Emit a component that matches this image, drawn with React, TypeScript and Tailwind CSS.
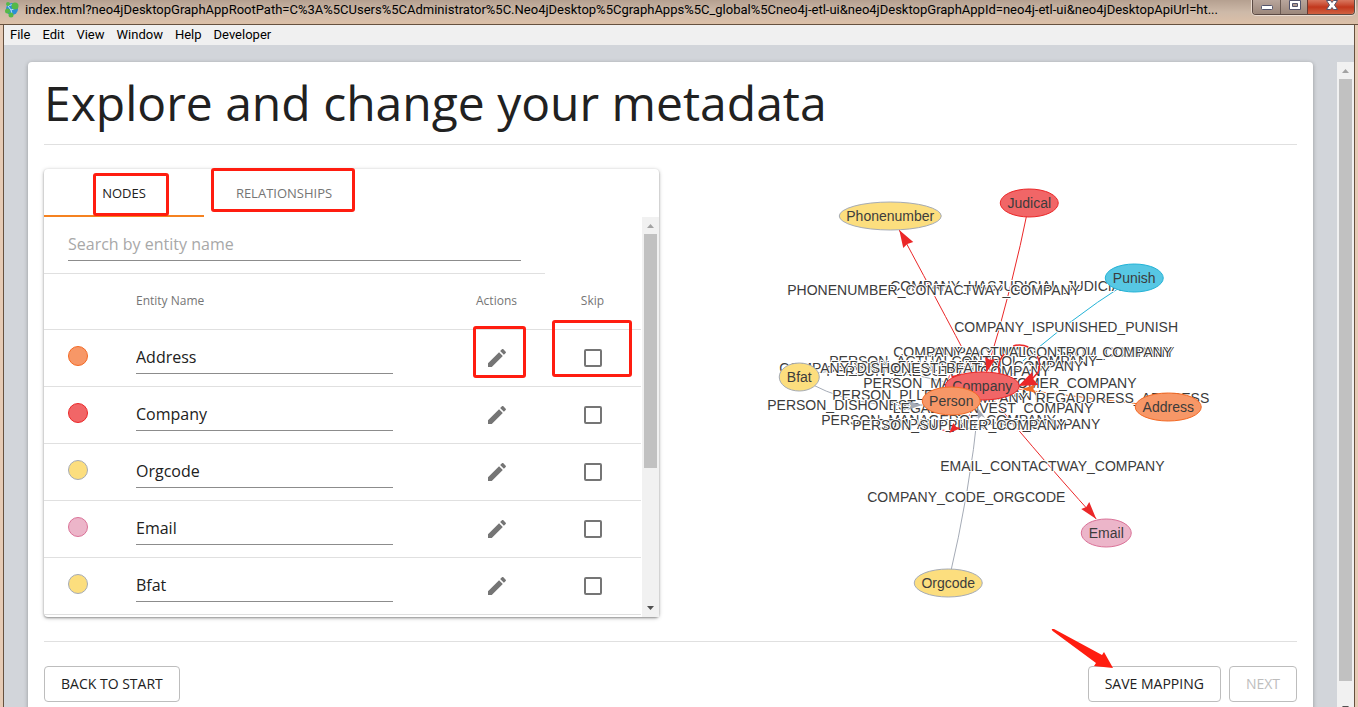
import { useState } from "react";
import type { ReactNode } from "react";

type Entity = { name: string; fill: string; stroke: string };

const entities: Entity[] = [
  { name: "Address", fill: "#f79767", stroke: "#f36924" },
  { name: "Company", fill: "#f16667", stroke: "#eb2728" },
  { name: "Orgcode", fill: "#fcde7e", stroke: "#a5abb6" },
  { name: "Email", fill: "#ecb5c9", stroke: "#da7298" },
  { name: "Bfat", fill: "#fcde7e", stroke: "#a5abb6" },
];

type EdgeLabel = { text: string; x: number; y: number; anchor?: "start" | "end" };

const edgeLabels: EdgeLabel[] = [
  { text: "COMPANY_HASJUDICIAL_JUDICIAL", x: 890, y: 286 },
  { text: "PHONENUMBER_CONTACTWAY_COMPANY", x: 787, y: 290 },
  { text: "COMPANY_ISPUNISHED_PUNISH", x: 954, y: 327 },
  { text: "COMPANY_MAINCUSTOM_COMPANY", x: 1174, y: 352, anchor: "end" },
  { text: "COMPANY_ACTUALCONTROL_COMPANY", x: 893, y: 352 },
  { text: "PERSON_ACTUALCONTROL_COMPANY", x: 829, y: 361 },
  { text: "PERSON_FINALCONTROL_COMPANY", x: 1083, y: 366, anchor: "end" },
  { text: "PERSON_EXECUTIVE_COMPANY", x: 826, y: 371 },
  { text: "COMPANY_DISHONEST_BFAT", x: 779, y: 368 },
  { text: "PERSON_MAJORCUSTOMER_COMPANY", x: 863, y: 383 },
  { text: "PERSON_PLLEDGE_COMPANY", x: 832, y: 395 },
  { text: "COMPANY_REGADDRESS_ADDRESS", x: 1209, y: 398, anchor: "end" },
  { text: "PERSON_DISHONEST_BFAT", x: 767, y: 405 },
  { text: "LEGALER_INVEST_COMPANY", x: 1093, y: 408, anchor: "end" },
  { text: "PERSON_MANAGEROF_COMPANY", x: 821, y: 420 },
  { text: "COMPANY_SUPPLIER_COMPANY", x: 1100, y: 424, anchor: "end" },
  { text: "PERSON_SUPPLIER_COMPANY", x: 852, y: 425 },
  { text: "EMAIL_CONTACTWAY_COMPANY", x: 940, y: 466 },
  { text: "COMPANY_CODE_ORGCODE", x: 867, y: 497 },
];

type GraphNode = Entity & { x: number; y: number; rx: number };

const graphNodes: GraphNode[] = [
  { name: "Phonenumber", x: 890, y: 216, rx: 51, fill: "#fcde7e", stroke: "#a5abb6" },
  { name: "Judical", x: 1029, y: 203, rx: 29, fill: "#f16667", stroke: "#eb2728" },
  { name: "Punish", x: 1134, y: 278, rx: 29, fill: "#57c7e3", stroke: "#23b3d7" },
  { name: "Bfat", x: 799, y: 377, rx: 20, fill: "#fcde7e", stroke: "#a5abb6" },
  { name: "Company", x: 982, y: 386, rx: 37, fill: "#f16667", stroke: "#eb2728" },
  { name: "Person", x: 951, y: 401, rx: 29, fill: "#f79767", stroke: "#f36924" },
  { name: "Address", x: 1168, y: 407, rx: 33, fill: "#f79767", stroke: "#f36924" },
  { name: "Email", x: 1106, y: 533, rx: 25, fill: "#ecb5c9", stroke: "#da7298" },
  { name: "Orgcode", x: 948, y: 583, rx: 34, fill: "#fcde7e", stroke: "#a5abb6" },
];

function Graph() {
  return (
    <svg viewBox="683 169 614 448" className="h-[448px] w-full" role="img" aria-label="Entity graph">
      <g fill="none" strokeWidth="1">
        <path d="M982 386Q950 325 899 230" stroke="#eb2728" />
        <path d="M1029 203Q1012 288 986 373" stroke="#eb2728" />
        <path d="M1134 278Q1058 326 1004 378" stroke="#23b3d7" />
        <path d="M799 377Q850 410 925 405" stroke="#a5abb6" />
        <path d="M799 377Q860 360 945 382" stroke="#a5abb6" />
        <path d="M948 583Q970 490 978 408" stroke="#a5abb6" />
        <path d="M1168 407Q1100 400 1018 389" stroke="#f36924" />
        <path d="M982 386Q1025 440 1096 519" stroke="#eb2728" />
        <path d="M951 401Q940 365 965 374M951 401Q925 435 953 430Q966 424 978 401" stroke="#eb2728" />
      </g>
      <g
        fill="#3c3c3c"
        stroke="#ffffff"
        strokeWidth="2"
        paintOrder="stroke"
        fontFamily="'Liberation Sans', Arial, sans-serif"
        fontSize="14"
      >
        {edgeLabels.map((label) => (
          <text key={label.text} x={label.x} y={label.y + 5} textAnchor={label.anchor ?? "start"}>
            {label.text}
          </text>
        ))}
      </g>
      <path
        d="M1001 378A20 20 0 0 1 1004 354M1013 346A20 20 0 0 1 1028 347M1037 356A20 20 0 0 1 1038 372L1030 381"
        fill="none"
        stroke="#eb2728"
        strokeWidth="1.500"
      />
      <g fill="#eb2728">
        <path d="M899 230L913 242L907 244L903 248Z" />
        <path d="M1096 519L1081 509L1086 507L1089 502Z" />
        <path d="M986 373L985 357L990 360L995 359Z" />
        <path d="M1018 386L1032 372L1033 379L1038 385Z" />
        <path d="M949 433L953 423L956 427L961 428Z" />
        <path d="M961 374L951 376L953 382L949 386L958 386Z" />
      </g>
      <path d="M1021 389L1035 385L1033 389L1036 393Z" fill="#f36924" />
      <path d="M922 405L907 401L911 406L907 410ZM977 407L978 419L981 416L985 418Z" fill="#a5abb6" />
      <g fontFamily="'Liberation Sans', Arial, sans-serif" fontSize="14" textAnchor="middle">
        {graphNodes.map((node) => (
          <g key={node.name}>
            <ellipse cx={node.x} cy={node.y} rx={node.rx} ry="14" fill={node.fill} stroke={node.stroke} />
            <text x={node.x} y={node.y + 5} fill="#3c3c3c">
              {node.name}
            </text>
          </g>
        ))}
      </g>
    </svg>
  );
}

function Highlight({ className }: { className: string }) {
  return (
    <span
      aria-hidden="true"
      className={`pointer-events-none absolute z-10 rounded-[3px] border-3 border-[#ff1d10] ${className}`}
    />
  );
}

function Scrollbar({ thumb, className = "" }: { thumb: string; className?: string }) {
  return (
    <div aria-hidden="true" className={`flex w-[17px] shrink-0 flex-col items-center bg-[#f1f1f1] ${className}`}>
      <svg className="size-[17px] shrink-0" viewBox="0 0 17 17" fill="#a3a3a3">
        <path d="M5 11L8.500 7L12 11Z" />
      </svg>
      <div className="flex w-full flex-1 flex-col items-center">
        <div className={`w-[13px] bg-[#c1c1c1] ${thumb}`} />
      </div>
      <svg className="size-[17px] shrink-0" viewBox="0 0 17 17" fill="#505050">
        <path d="M5 6L8.500 10L12 6Z" />
      </svg>
    </div>
  );
}

function PencilIcon() {
  return (
    <svg viewBox="0 0 24 24" className="size-6" fill="#757575" aria-hidden="true">
      <path d="M3 17.250V21h3.750L17.810 9.940l-3.750-3.750L3 17.250zM20.710 7.040c.39-.39.39-1.020 0-1.410l-2.340-2.340c-.39-.39-1.020-.39-1.410 0l-1.830 1.830 3.750 3.750 1.830-1.830z" />
    </svg>
  );
}

function EntityRow({ entity, marked }: { entity: Entity; marked: boolean }) {
  const [name, setName] = useState(entity.name);
  return (
    <tr className="h-[57px] border-b border-[#e0e0e0]">
      <td className="pb-1 pl-6">
        <svg viewBox="0 0 20 20" className="size-5" aria-hidden="true">
          <circle cx="10" cy="10" r="9.500" fill={entity.fill} stroke={entity.stroke} />
        </svg>
      </td>
      <td className="pr-14">
        <input
          aria-label={`${entity.name} entity name`}
          value={name}
          onChange={(event) => setName(event.target.value)}
          className="h-8 w-full border-b border-[#8c8c8c] text-base text-[#212121] outline-none"
        />
      </td>
      <td className="relative">
        <button type="button" aria-label={`Edit ${entity.name}`} className="mx-auto block">
          <PencilIcon />
        </button>
        {marked && <Highlight className="-top-1 left-6 h-[52px] w-[53px]" />}
      </td>
      <td className="relative">
        <input
          type="checkbox"
          aria-label={`Skip ${entity.name}`}
          className="mx-auto block size-[18px] appearance-none rounded-[2px] border-2 border-[#757575] checked:bg-[#757575]"
        />
        {marked && <Highlight className="-top-2.5 left-[7px] h-[57px] w-20" />}
      </td>
    </tr>
  );
}

function EntityPanel() {
  return (
    <section className="rounded-sm bg-white shadow-[0_1px_4px_rgba(0,0,0,0.25),0_1px_2px_rgba(0,0,0,0.3)]">
      <div role="tablist" className="flex h-12 text-[13px]">
        <button
          type="button"
          role="tab"
          aria-selected="true"
          className="relative w-40 border-b-2 border-[#f58220] pt-1 text-[#212121]"
        >
          NODES
          <Highlight className="left-[49px] top-1 h-[43px] w-[76px]" />
        </button>
        <button
          type="button"
          role="tab"
          aria-selected="false"
          className="relative w-40 border-b-2 border-transparent pt-1 text-[#757575]"
        >
          RELATIONSHIPS
          <Highlight className="-top-px left-[7px] h-11 w-36" />
        </button>
      </div>
      <div className="flex">
        <div className="min-w-0 flex-1 pr-px pb-0.5">
          <div className="mr-24 h-[57px] border-b border-[#e0e0e0] px-6 pt-3">
            <input
              aria-label="Search by entity name"
              placeholder="Search by entity name"
              className="h-8 w-full border-b border-[#8c8c8c] pb-0.5 text-base text-[#212121] outline-none placeholder:text-[#a8a8a8]"
            />
          </div>
          <table className="w-full table-fixed border-collapse">
            <thead>
              <tr className="h-[55px] border-b border-[#e0e0e0] text-xs text-[#757575]">
                <th className="w-[92px]" />
                <th className="text-left font-normal">Entity Name</th>
                <th className="w-24 font-normal">Actions</th>
                <th className="w-24 font-normal">Skip</th>
              </tr>
            </thead>
            <tbody>
              {entities.map((entity, index) => (
                <EntityRow key={entity.name} entity={entity} marked={index === 0} />
              ))}
            </tbody>
          </table>
        </div>
        <Scrollbar thumb="h-[234px]" />
      </div>
    </section>
  );
}

function OutlineButton({ children, disabled = false }: { children: ReactNode; disabled?: boolean }) {
  return (
    <button
      type="button"
      disabled={disabled}
      className="h-9 rounded-sm border border-[#bdbdbd] px-4 text-sm text-[#212121] disabled:text-[#bdbdbd]"
    >
      {children}
    </button>
  );
}

function AppIcon() {
  return (
    <svg viewBox="0 0 16 18" className="h-[18px] w-4 shrink-0" aria-hidden="true">
      <circle cx="8" cy="9" r="6" fill="#2b8fd6" />
      <path d="M4 6L7 10L12 8M7 10L8 14M4 6L10 4" stroke="#bfe3f7" fill="none" />
      <circle cx="4" cy="4" r="2" fill="#54b948" />
      <circle cx="11" cy="6" r="3.500" fill="#54b948" />
      <circle cx="3.500" cy="11" r="2.500" fill="#54b948" />
      <circle cx="7" cy="15" r="2.500" fill="#54b948" />
    </svg>
  );
}

function TitleBar() {
  return (
    <header className="flex h-[25px] items-start border-b border-[#66513f] bg-linear-to-b from-[#b5a090] via-[#cdb9a8] to-[#dcc0a8] pl-1">
      <AppIcon />
      <p className="min-w-0 flex-1 pl-[5px] font-['Roboto',sans-serif] text-[13px] leading-5 whitespace-nowrap text-black">
        index.html?neo4jDesktopGraphAppRootPath=C%3A%5CUsers%5CAdministrator%5C.Neo4jDesktop%5CgraphApps%5C_global%5Cneo4j-etl-ui&amp;neo4jDesktopGraphAppId=neo4j-etl-ui&amp;neo4jDesktopApiUrl=ht...
      </p>
      <div className="mr-[3px] flex h-[15px] shrink-0 overflow-hidden rounded-b-sm border border-t-0 border-[#5b4a44] shadow-[0_0_0_1px_#eadbd0]">
        <button type="button" aria-label="Minimize" className="w-7 border-r border-[#6b5a52] bg-linear-to-b from-[#b9a69c] to-[#9b877b]">
          <svg viewBox="0 0 28 14" className="h-3.5 w-7">
            <rect x="8.500" y="5.500" width="11" height="4" rx="1" fill="#fff" stroke="#53546b" />
          </svg>
        </button>
        <button type="button" aria-label="Maximize" className="w-[27px] border-r border-[#6b3a32] bg-linear-to-b from-[#b9a69c] to-[#9b877b]">
          <svg viewBox="0 0 27 14" className="h-3.5 w-[27px]">
            <path d="M8.500 .500h11v9h-11ZM11.500 3.500v3h5v-3Z" fillRule="evenodd" fill="#fff" stroke="#53546b" />
          </svg>
        </button>
        <button type="button" aria-label="Close" className="w-[46px] bg-linear-to-b from-[#d8775f] via-[#c2371c] to-[#cf6040]">
          <svg viewBox="0 0 46 14" className="h-3.5 w-[46px]">
            <path d="M18.500 .500h4L24 2.500L25.500 .500h4L26.500 5L29.500 9.500h-4L24 7.500L22.500 9.500h-4L21.500 5Z" fill="#fff" stroke="#53546b" />
          </svg>
        </button>
      </div>
    </header>
  );
}

const menuItems = ["File", "Edit", "View", "Window", "Help", "Developer"];

export default function App() {
  return (
    <div className="flex h-screen flex-col overflow-hidden bg-[#e6cbb5] font-['Open_Sans','Noto_Sans',sans-serif]">
      <TitleBar />
      <div className="mr-[3px] ml-[3px] flex min-h-0 flex-1 flex-col border-x border-[#66513f] bg-[#d2d5da]">
        <nav className="flex h-5 shrink-0 items-center gap-3 bg-[#f0f0f0] pl-1.5 font-['Roboto',sans-serif] text-[13px] text-black">
          {menuItems.map((item) => (
            <button type="button" key={item}>
              {item}
            </button>
          ))}
        </nav>
        <div className="flex min-h-0 flex-1 pt-[17px]">
          <main className="mr-6 ml-6 min-w-0 flex-1">
            <div className="rounded-sm bg-white p-4 shadow-[0_1px_4px_rgba(0,0,0,0.3)]">
              <h1 className="h-[67px] border-b border-[#e0e0e0] text-5xl leading-[50px] text-[#212121]">
                Explore and change your metadata
              </h1>
              <div className="mt-6 grid grid-cols-2 gap-6">
                <EntityPanel />
                <Graph />
              </div>
              <footer className="mt-6 flex justify-between border-t border-[#e0e0e0] pt-6">
                <OutlineButton>BACK TO START</OutlineButton>
                <div className="relative flex gap-2">
                  <OutlineButton>SAVE MAPPING</OutlineButton>
                  <OutlineButton disabled>NEXT</OutlineButton>
                  <svg
                    viewBox="0 0 64 42"
                    className="pointer-events-none absolute -top-[38px] -left-[37px] h-[42px] w-16"
                    fill="#ff1d10"
                    aria-hidden="true"
                  >
                    <path d="M1 1Q0 2 3 4L45 35L43 38L62 40L53 24L51 27L3 1Z" />
                  </svg>
                </div>
              </footer>
            </div>
          </main>
          <Scrollbar thumb="h-[97%]" className="-mb-2.5" />
        </div>
      </div>
    </div>
  );
}
